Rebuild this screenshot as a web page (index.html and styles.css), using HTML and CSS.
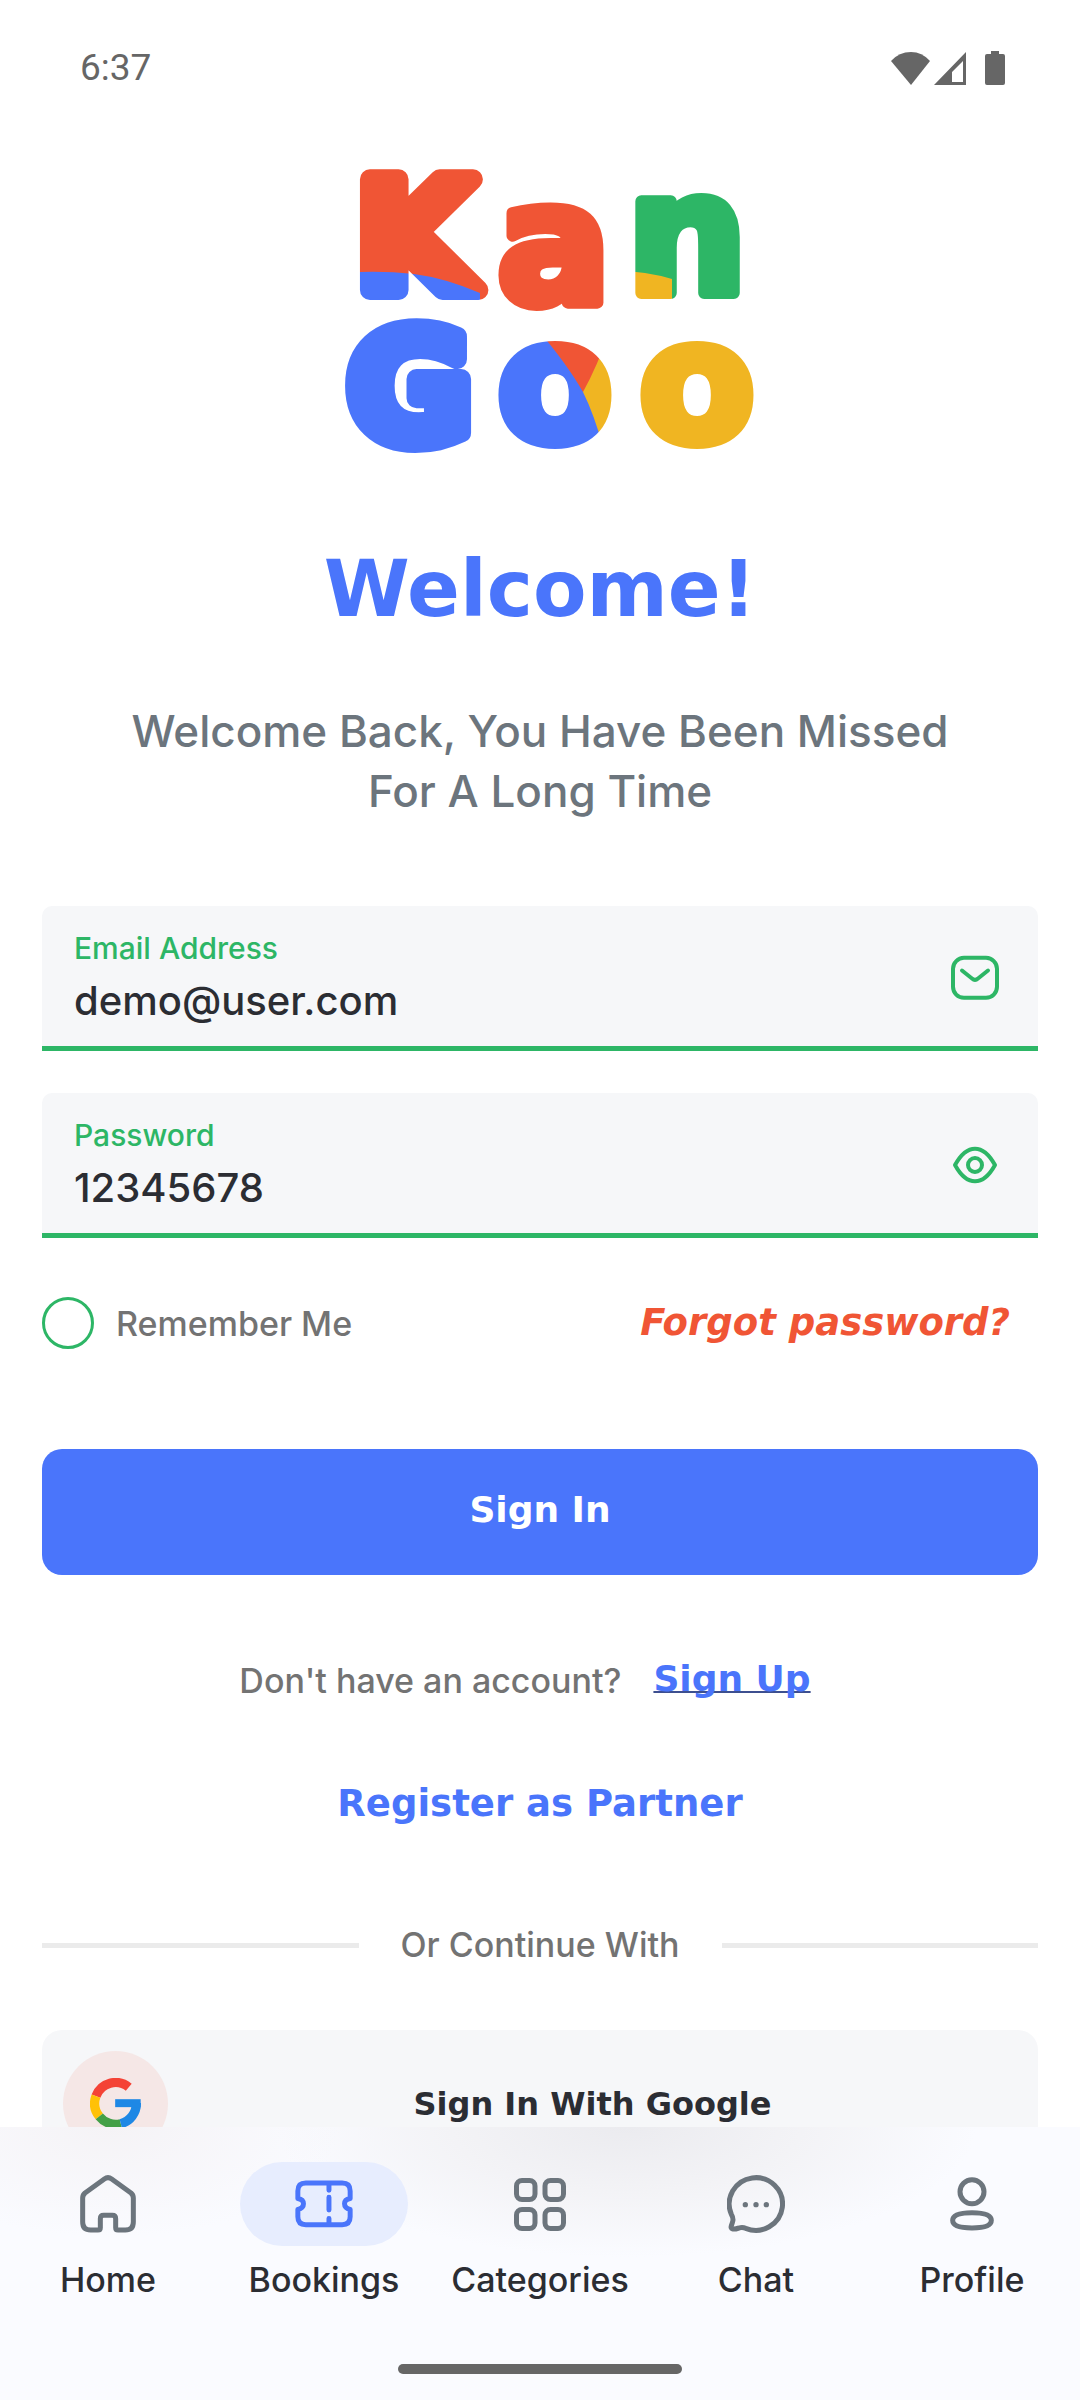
FILE: index.html
```html
<!DOCTYPE html>
<html lang="en">
<head>
<meta charset="utf-8">
<meta name="viewport" content="width=device-width, initial-scale=1">
<title>KanGoo</title>
<link rel="stylesheet" href="styles.css">
</head>
<body>
<div class="app">
  <header class="status">
    <time>6:37</time>
    <div class="status-icons">
      <svg width="39" height="33" viewBox="0 0 39 33" aria-hidden="true"><path d="M20 33 0 9Q8 0 20 0Q31 0 39 9Z"/></svg>
      <svg class="signal" width="32" height="33" viewBox="0 0 32 33" aria-hidden="true"><path fill-rule="evenodd" d="M32 0V33H0ZM29 9 18 20V30H29Z"/></svg>
      <svg width="20" height="34" viewBox="0 0 20 34" aria-hidden="true"><path d="M6 0H14V3H18Q20 3 20 5V32Q20 34 18 34H2Q0 34 0 32V5Q0 3 2 3H6Z"/></svg>
    </div>
  </header>

  <main class="content">
    <svg class="logo" viewBox="-10 0 460 310" role="img" aria-label="KanGoo">
      <defs>
        <pattern id="brand" patternUnits="userSpaceOnUse" x="0" y="0" width="460" height="310">
          <rect width="298" height="156" fill="#f05535"/>
          <path d="M0 115Q50 109 94 114Q125 118 160 133V156H0Z" fill="#4a75fb"/>
          <path d="M290 122H300V156H290Z" fill="#f0b522"/>
          <rect x="298" width="162" height="156" fill="#2db666"/>
          <path d="M298 111Q325 111 352 119V156H298Z" fill="#f0b522"/>
          <rect y="156" width="306" height="154" fill="#4a75fb"/>
          <path d="M218 170Q247 204 263 232L290 200V170Z" fill="#f05535"/>
          <path d="M290 170Q277 207 263 232Q274 254 284 290H306V170Z" fill="#f0b522"/>
          <rect x="306" y="156" width="154" height="154" fill="#f0b522"/>
        </pattern>
      </defs>
      <g class="logo-letters">
        <text class="logo-cap" x="95" y="130">K</text>
        <text x="234" y="143">a</text>
        <text x="367" y="133">n</text>
        <text class="logo-cap" x="90" y="281">G</text>
        <text x="235" y="281">o</text>
        <text x="377" y="281">o</text>
      </g>
    </svg>

    <h1 class="title">Welcome!</h1>
    <p class="lead">Welcome Back, You Have Been Missed For A Long Time</p>

    <form class="form">
      <div class="field">
        <div class="field-text">
          <label for="email">Email Address</label>
          <input id="email" type="text" value="demo@user.com">
        </div>
        <svg width="48" height="46" viewBox="1053 197 144 137" aria-hidden="true"><rect x="1059" y="205" width="132" height="120" rx="33"/><path d="M1086 243 1116 267Q1125 275 1134 267L1164 243"/></svg>
      </div>
      <div class="field">
        <div class="field-text">
          <label for="password">Password</label>
          <input id="password" type="text" value="12345678">
        </div>
        <button class="reveal" type="button" aria-label="Hide password"><svg width="48" height="46" viewBox="1053 760 144 138" aria-hidden="true"><path d="M1065 829Q1092 780 1125 780Q1158 780 1185 829Q1158 878 1125 878Q1092 878 1065 829Z"/><circle cx="1125" cy="829" r="21"/></svg></button>
      </div>
      <div class="options">
        <label class="remember"><input type="checkbox">Remember Me</label>
        <a class="forgot" href="#">Forgot password?</a>
      </div>
      <button class="submit" type="submit">Sign In</button>
    </form>

    <p class="signup">Don't have an account? <a href="#">Sign Up</a></p>
    <a class="partner" href="#">Register as Partner</a>
    <div class="divider">Or Continue With</div>
    <button class="google" type="button">
      <span class="google-mark">
        <svg width="51" height="51" viewBox="180 530 154 154" aria-hidden="true">
          <path d="M198 585A63 63 0 0 1 297 558" stroke="#f44336"/>
          <path d="M208 646A63 63 0 0 1 198 585" stroke="#ffc107"/>
          <path d="M273 668A63 63 0 0 1 208 646" stroke="#43a047"/>
          <path d="M320 606A63 63 0 0 1 273 668" stroke="#1e88e5"/>
          <rect x="256" y="594" width="77" height="24" fill="#1e88e5"/>
        </svg>
      </span>
      <span class="google-label">Sign In With Google</span>
    </button>
  </main>

  <footer class="bottom">
    <nav class="tabs">
      <a class="tab" href="#"><span class="tab-icon"><svg width="56" height="58" viewBox="150 826 168 174" aria-hidden="true"><path d="M158 967V895Q158 886 165 880L223 838Q234 830 245 838L303 880Q310 886 310 895V967Q310 991 286 991H264Q257 991 257 984V957Q257 947 247 947H221Q211 947 211 957V984Q211 991 204 991H182Q158 991 158 967Z"/></svg></span>Home</a>
      <a class="tab active" href="#" aria-current="page"><span class="tab-icon"><svg width="58" height="48" viewBox="795 841 174 145" aria-hidden="true"><path d="M827 850H937Q961 850 961 874V897Q944 900 944 913Q944 926 961 930V952Q961 976 937 976H827Q803 976 803 952V930Q820 926 820 913Q820 900 803 897V874Q803 850 827 850ZM897 852V872M897 893V932M897 957V974"/></svg></span>Bookings</a>
      <a class="tab" href="#"><span class="tab-icon"><svg width="52" height="53" viewBox="0 0 104 106" aria-hidden="true"><g stroke-width="10"><rect x="5" y="5" width="37" height="38" rx="11"/><rect x="62" y="5" width="37" height="38" rx="11"/><rect x="5" y="63" width="37" height="38" rx="11"/><rect x="62" y="63" width="37" height="38" rx="11"/></g></svg></span>Categories</a>
      <a class="tab" href="#"><span class="tab-icon"><svg width="58" height="58" viewBox="0 0 174 174" aria-hidden="true"><path d="M13 118A80 79 0 1 1 56 160Q46 155 36 159Q8 168 13 152Q18 138 18 134Q18 127 13 118Z"/><g class="dots"><circle cx="55" cy="89" r="8"/><circle cx="87" cy="89" r="8"/><circle cx="118" cy="89" r="8"/></g></svg></span>Chat</a>
      <a class="tab" href="#"><span class="tab-icon"><svg width="44" height="54" viewBox="0 0 132 162" aria-hidden="true"><circle cx="66" cy="44" r="36"/><path d="M66 107C100 107 124 112 124 130C124 147 100 153 66 153C32 153 8 147 8 130C8 112 32 107 66 107Z"/></svg></span>Profile</a>
    </nav>
    <div class="handle"></div>
  </footer>
</div>
</body>
</html>
```
FILE: styles.css
```css
:root {
  --blue: #4a75fb;
  --red: #f05535;
  --green: #2db666;
  --ink: #2b2d33;
  --slate: #6c757d;
  --grey: #737373;
  --panel: #f6f7f9;
  --display: "DejaVu Sans", sans-serif;
}

* { box-sizing: border-box; }

body {
  margin: 0;
  background: #fff;
  color: var(--ink);
  font-family: Inter, sans-serif;
  font-size: 34px;
  font-weight: 500;
}

a { color: inherit; text-decoration: none; }
h1, p { margin: 0; }
svg { display: block; }

button, input {
  margin: 0;
  padding: 0;
  border: 0;
  background: none;
  color: inherit;
  font: inherit;
}

.app {
  display: flex;
  flex-direction: column;
  height: 100vh;
}

/* Status bar */
.status {
  display: flex;
  flex: none;
  justify-content: space-between;
  align-items: center;
  padding: 48px 75px 0 80px;
  color: #666;
  font: 400 37px/40px Roboto, sans-serif;
}
.status-icons { display: flex; align-items: center; gap: 4px; fill: #666; }
.signal { margin-right: 15px; }

/* Scrolling page */
.content {
  flex: 1;
  min-height: 0;
  overflow-y: auto;
  scrollbar-width: none;
  padding: 72px 42px 40px;
}

.logo { width: 460px; height: 310px; margin: 0 auto; overflow: visible; }
.logo-letters {
  fill: url(#brand);
  stroke: url(#brand);
  stroke-width: 12px;
  stroke-linejoin: round;
  font: 700 168px var(--display);
  text-anchor: middle;
}
.logo-cap { stroke-width: 20px; font-size: 152px; }

.title {
  margin-top: 74px;
  color: var(--blue);
  font: 700 78px/90px var(--display);
  text-align: center;
}

.lead {
  max-width: 860px;
  margin: 67px auto 0;
  color: var(--slate);
  font-size: 44px;
  line-height: 60px;
  text-align: center;
}

.form { margin-top: 85px; }

.field {
  display: flex;
  align-items: center;
  height: 145px;
  margin-bottom: 42px;
  padding: 4px 39px 0 32px;
  border-bottom: 5px solid var(--green);
  border-radius: 10px 10px 0 0;
  background: var(--panel);
}
.field svg {
  fill: none;
  stroke: var(--green);
  stroke-width: 12px;
  stroke-linecap: round;
  stroke-linejoin: round;
}
.field-text { display: flex; flex: 1; flex-direction: column; gap: 4px; }
.field-text label { color: var(--green); font-size: 30px; line-height: 40px; }
.field-text input {
  width: 100%;
  height: 56px;
  outline: 0;
  font-size: 40px;
}

.options {
  display: flex;
  justify-content: space-between;
  align-items: center;
  margin-top: 59px;
  padding-right: 28px;
}
.remember { display: flex; align-items: center; gap: 22px; color: var(--grey); }
.remember input {
  appearance: none;
  width: 52px;
  height: 52px;
  border: 3px solid var(--green);
  border-radius: 50%;
}
.remember input:checked { background: var(--green); }
.forgot { color: var(--red); font: italic 700 37px/44px var(--display); }

.submit {
  width: 100%;
  height: 126px;
  margin-top: 100px;
  padding-bottom: 4px;
  border-radius: 20px;
  background: var(--blue);
  color: #fff;
  font: 700 36px/44px var(--display);
}

.signup {
  display: flex;
  justify-content: center;
  gap: 32px;
  margin-top: 84px;
  padding-right: 30px;
  color: var(--grey);
  line-height: 44px;
}
.signup a {
  color: var(--blue);
  font: 700 36px/40px var(--display);
  text-decoration: underline 2px #3d4f8f;
  text-decoration-skip-ink: none;
  text-underline-offset: 0;
}

.partner {
  display: block;
  width: fit-content;
  margin: 79px auto 0;
  color: var(--blue);
  font: 700 37px/44px var(--display);
}

.divider {
  display: flex;
  align-items: center;
  gap: 42px;
  margin-top: 97px;
  color: var(--grey);
  line-height: 44px;
}
.divider::before, .divider::after {
  content: "";
  flex: 1;
  height: 5px;
  background: #ebebeb;
}

.google {
  display: flex;
  align-items: center;
  width: 100%;
  height: 147px;
  margin-top: 63px;
  padding: 0 21px;
  border-radius: 20px;
  background: var(--panel);
}
.google-mark {
  display: grid;
  place-items: center;
  width: 105px;
  height: 105px;
  border-radius: 50%;
  background: #f5e7e6;
}
.google-mark svg { fill: none; stroke-width: 28px; }
.google-mark rect { stroke: none; }
.google-label { flex: 1; font: 700 32px/40px var(--display); }

/* Bottom navigation */
.bottom {
  flex: none;
  padding: 35px 0 26px;
  background:
    radial-gradient(ellipse 230px 110px at 110px 0, #f5f3f6, transparent),
    radial-gradient(ellipse 350px 130px at 58% 0, #ebebef, #f3f3f6 50%, transparent),
    #fafbff;
}
.tabs { display: grid; grid-template-columns: repeat(5, 1fr); }
.tab {
  display: flex;
  flex-direction: column;
  align-items: center;
  gap: 14px;
  line-height: 40px;
}
.tab-icon {
  display: grid;
  place-items: center;
  width: 168px;
  height: 84px;
  border-radius: 42px;
}
.tab svg {
  fill: none;
  stroke: var(--slate);
  stroke-width: 15px;
  stroke-linejoin: round;
  stroke-linecap: round;
}
.tab .dots { fill: var(--slate); stroke: none; }
.active .tab-icon { background: #e7edfe; }
.tab.active svg { stroke: var(--blue); }

.handle {
  width: 284px;
  height: 10px;
  margin: 64px auto 0;
  border-radius: 5px;
  background: #666;
}
```
